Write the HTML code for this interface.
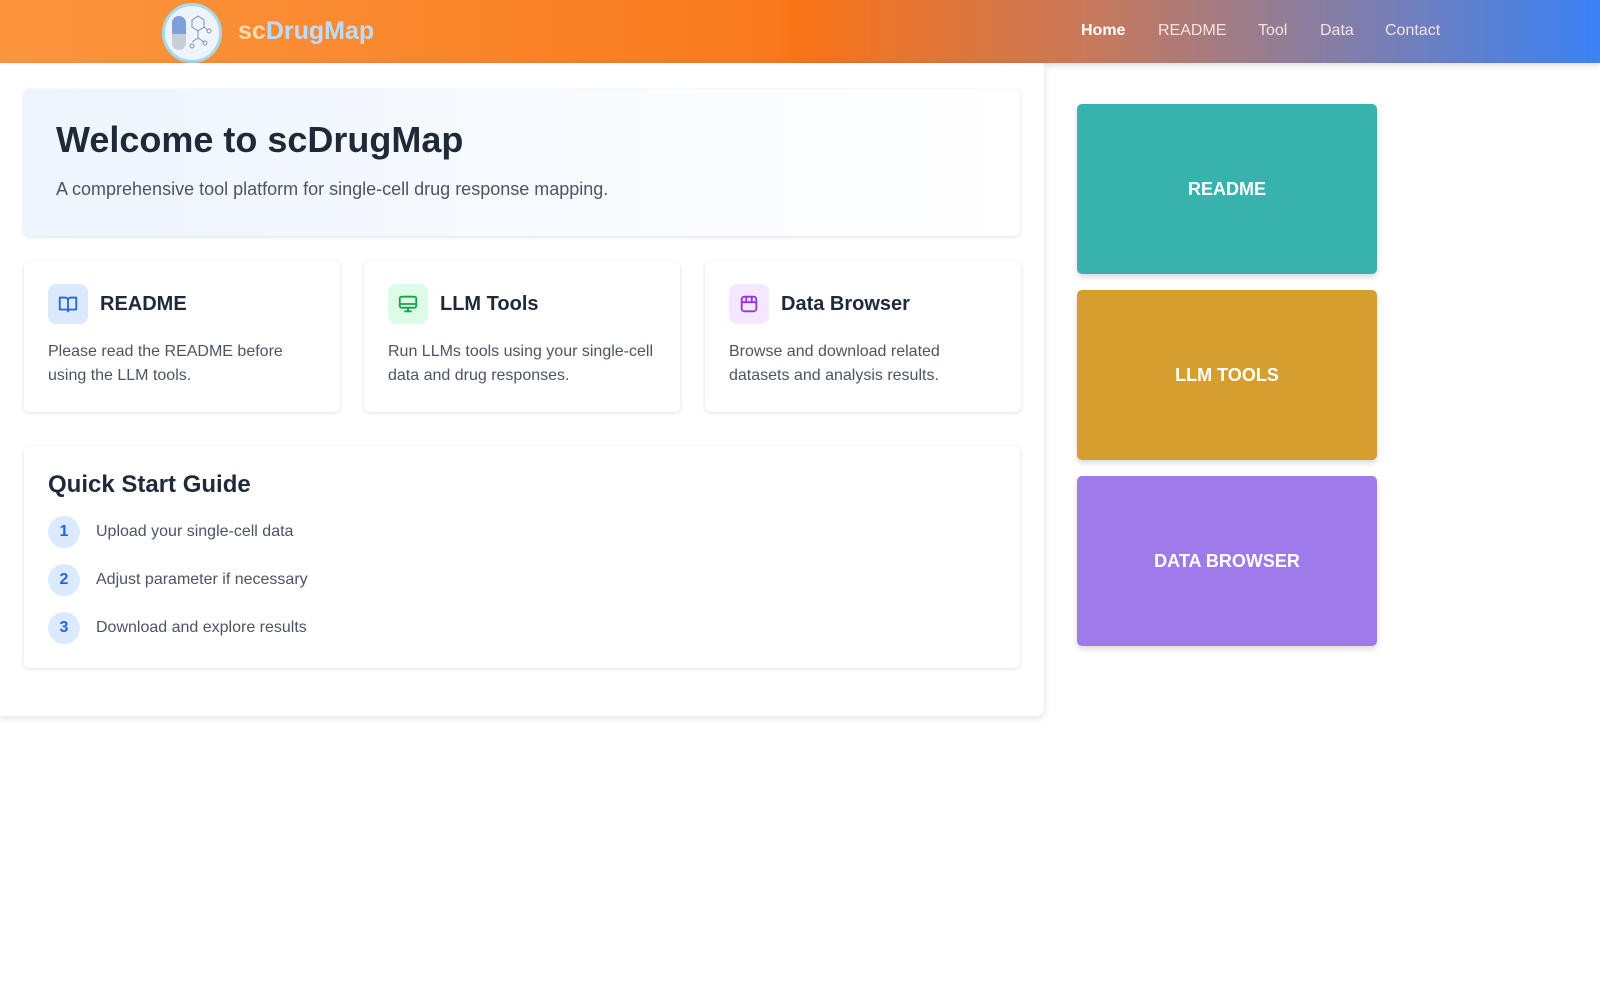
<!DOCTYPE html>
<html><head><meta charset="utf-8"><style>
*{box-sizing:border-box;margin:0;padding:0}
body{width:1600px;height:1000px;background:#fff;font-family:"Liberation Sans",sans-serif;position:relative;overflow:hidden}
.hdr{position:absolute;left:0;top:0;width:1600px;height:63px;background:linear-gradient(90deg,#fb963f 0%,#f97a1d 48%,#f97316 50%,#c9795a 68%,#3b82f6 100%);box-shadow:0 2px 6px rgba(0,0,0,.15)}
.logo{position:absolute;left:162px;top:3px;width:60px;height:60px;border-radius:50%;background:#eef4fb;border:3px solid #a8d8ea}
.brand{position:absolute;left:238px;top:17px;font-size:25px;font-weight:bold;color:#fcd9b0}
.brand span{color:#bcdcff}
.nav{position:absolute;top:22px;font-size:16px;color:#f3e3e0}
.main{position:absolute;left:0;top:63px;width:1044px;height:653px;background:#fff;border-radius:0 0 8px 0;box-shadow:0 2px 8px rgba(0,0,0,.12)}
.card{position:absolute;background:#fff;border-radius:6px;box-shadow:0 1px 4px rgba(0,0,0,.13)}
.hero{left:24px;top:89px;width:996px;height:147px;background:linear-gradient(90deg,#eef5fe,#fff)}
.hero h1{position:absolute;left:32px;top:30px;font-size:36px;color:#1f2937}
.hero p{position:absolute;left:32px;top:90px;font-size:18px;color:#4b5563}
.f{top:261px;width:316px;height:151px}
.ic{position:absolute;left:24px;top:23px;width:40px;height:40px;border-radius:8px;display:flex;align-items:center;justify-content:center}
.f h3{position:absolute;left:76px;top:32px;font-size:20px;color:#1f2937}
.f p{position:absolute;left:24px;top:79px;font-size:16px;line-height:24px;color:#4b5563;width:275px}
.qs{left:24px;top:446px;width:996px;height:222px}
.qs h2{position:absolute;left:24px;top:25px;font-size:24px;color:#1f2937}
.st{position:absolute;left:24px;width:600px;height:32px}
.st b{position:absolute;left:0;top:0;width:32px;height:32px;border-radius:50%;background:#dbeafe;color:#2563eb;font-size:16px;text-align:center;line-height:32px}
.st span{position:absolute;left:48px;top:7px;font-size:16px;color:#4b5563}
.tile{position:absolute;left:1077px;width:300px;height:170px;border-radius:5px;color:#fff;font-weight:bold;font-size:18px;display:flex;align-items:center;justify-content:center;box-shadow:0 3px 6px rgba(0,0,0,.15)}
</style></head><body>
<div class="hdr">
<div class="logo"><svg width="54" height="54" viewBox="0 0 54 54"><rect x="7" y="10" width="14" height="34" rx="7" fill="#c9ced6"/><path d="M7 28V17a7 7 0 0 1 14 0v11z" fill="#7e9fd8"/><g stroke="#8190a8" fill="none" stroke-width="1"><path d="M27 14l6-4 6 4v7l-6 4-6-4z"/><path d="M33 25v7l6 4M33 32l-6 4M39 21l4 3"/><circle cx="44" cy="25" r="2"/><circle cx="40" cy="37" r="2"/><circle cx="27" cy="40" r="2"/></g></svg></div>
<div class="brand">sc<span>DrugMap</span></div>
<div class="nav" style="left:1081px;font-weight:bold;color:#fff">Home</div>
<div class="nav" style="left:1158px">README</div>
<div class="nav" style="left:1258px">Tool</div>
<div class="nav" style="left:1320px">Data</div>
<div class="nav" style="left:1385px">Contact</div>
</div>
<div class="main"></div>
<div class="card hero"><h1>Welcome to scDrugMap</h1><p>A comprehensive tool platform for single-cell drug response mapping.</p></div>
<div class="card f" style="left:24px"><div class="ic" style="background:#dbeafe"><svg width="22" height="22" viewBox="0 0 24 24" fill="none" stroke="#2563eb" stroke-width="2" stroke-linejoin="round"><path d="M3 5h6a3 3 0 0 1 3 3v12a2 2 0 0 0-2-2H3zM21 5h-6a3 3 0 0 0-3 3v12a2 2 0 0 1 2-2h7z"/></svg></div><h3>README</h3><p>Please read the README before using the LLM tools.</p></div>
<div class="card f" style="left:364px"><div class="ic" style="background:#dcfce7"><svg width="22" height="22" viewBox="0 0 24 24" fill="none" stroke="#16a34a" stroke-width="2"><rect x="3" y="4" width="18" height="12" rx="2"/><path d="M3 12h18M12 16v4M8 20h8"/></svg></div><h3>LLM Tools</h3><p>Run LLMs tools using your single-cell data and drug responses.</p></div>
<div class="card f" style="left:705px"><div class="ic" style="background:#f3e8ff"><svg width="22" height="22" viewBox="0 0 24 24" fill="none" stroke="#9333ea" stroke-width="2"><rect x="4" y="4" width="16" height="16" rx="3"/><path d="M4 10h16M9 4v5M15 4v5"/></svg></div><h3>Data Browser</h3><p>Browse and download related datasets and analysis results.</p></div>
<div class="card qs"><h2>Quick Start Guide</h2>
<div class="st" style="top:70px"><b>1</b><span>Upload your single-cell data</span></div>
<div class="st" style="top:118px"><b>2</b><span>Adjust parameter if necessary</span></div>
<div class="st" style="top:166px"><b>3</b><span>Download and explore results</span></div>
</div>
<div class="tile" style="top:104px;background:#38b2ac">README</div>
<div class="tile" style="top:290px;background:#d69e2e">LLM TOOLS</div>
<div class="tile" style="top:476px;background:#9f7aea">DATA BROWSER</div>
</body></html>
